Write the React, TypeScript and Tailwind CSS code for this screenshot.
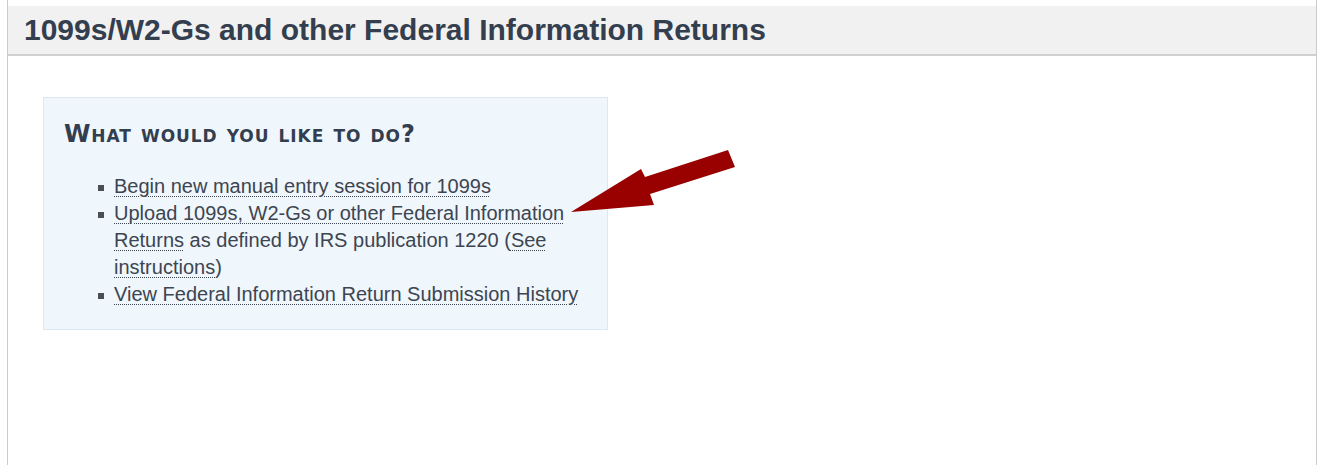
import React from "react";

export default function App() {
  const link = "underline decoration-dotted decoration-1 underline-offset-[3px]";
  return (
    <div className="w-[1327px] h-[465px] bg-white overflow-hidden relative" style={{ fontFamily: '"Liberation Sans", Arial, sans-serif' }}>
      <div className="ml-[7px] w-[1310px] h-[465px] border-x border-[#cccccc] pt-[6px]">
        <div className="h-[50px] bg-[#f1f1f1] border-b-2 border-[#d0d0d0] pl-[16px] flex items-center">
          <h1 className="text-[30px] font-bold text-[#333e4f] leading-none">1099s/W2-Gs and other Federal Information Returns</h1>
        </div>
        <div className="pl-[35px] pt-[41px]">
          <div className="w-[565px] h-[233px] bg-[#eff6fc] border border-[#dbe8f2] pl-[20px] pt-[24px]">
            <h2 className="text-[24px] font-bold text-[#333e4f] leading-none [font-variant:small-caps] tracking-[0.9px]" style={{ fontFamily: '"DejaVu Sans", sans-serif' }}>What would you like to do?</h2>
            <ul className="mt-[27px] pl-[34px] text-[20px] leading-[27px] text-[#3d4551]">
              <li className="flex"><span className="w-[16px] shrink-0 pt-[12px]"><span className="block w-[6px] h-[6px] bg-[#4a4f57]" /></span><span><a className={link}>Begin new manual entry session for 1099s</a></span></li>
              <li className="flex"><span className="w-[16px] shrink-0 pt-[12px]"><span className="block w-[6px] h-[6px] bg-[#4a4f57]" /></span><span className="w-[462px]"><a className={link}>Upload 1099s, W2-Gs or other Federal Information Returns</a> as defined by IRS publication 1220 (<a className={link}>See instructions</a>)</span></li>
              <li className="flex"><span className="w-[16px] shrink-0 pt-[12px]"><span className="block w-[6px] h-[6px] bg-[#4a4f57]" /></span><span><a className={link}>View Federal Information Return Submission History</a></span></li>
            </ul>
          </div>
        </div>
      </div>
      <svg className="absolute left-0 top-0" width="1327" height="465" viewBox="0 0 1327 465">
        <polygon points="571,212 641,169 645,177 728,150 735,167 650,194 654,205" fill="#990000" />
      </svg>
    </div>
  );
}
